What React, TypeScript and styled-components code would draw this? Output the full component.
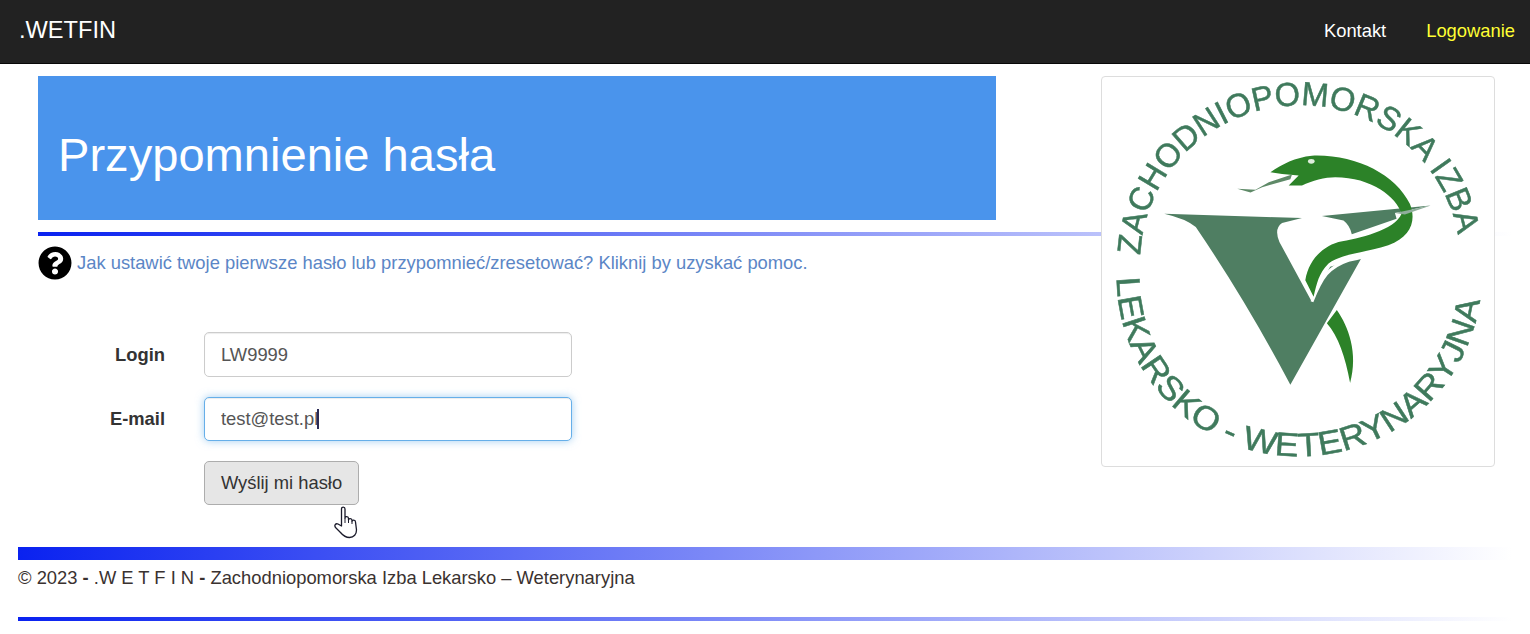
import styled, { createGlobalStyle } from "styled-components";
import { FaQuestionCircle } from "react-icons/fa";

const GlobalStyle = createGlobalStyle`
  html, body {
    margin: 0;
    padding: 0;
    height: 100%;
    overflow: hidden;
    background: #fff;
  }
  body {
    font-family: "Liberation Sans", Arial, sans-serif;
    font-size: 18.36px;
    color: #333;
  }
`;

const RULE_GRADIENT = "linear-gradient(to right, #0a22f0 0%, #ffffff 100%)";

const NavBar = styled.nav`
  height: 64px;
  box-sizing: border-box;
  background: #222;
  border-bottom: 1px solid #080808;
  display: flex;
  align-items: center;
  justify-content: space-between;
  padding: 0 15px 2px 19px;
`;

const Brand = styled.a`
  color: #fff;
  font-size: 23.6px;
`;

const NavLinks = styled.div`
  display: flex;
  gap: 40px;
`;

const NavLink = styled.a<{ active?: boolean }>`
  color: ${({ active }) => (active ? "#ffff33" : "#fff")};
`;

const Main = styled.main`
  position: relative;
  padding: 12px 18px 0 38px;
`;

const Banner = styled.header`
  width: 958px;
  height: 144px;
  box-sizing: border-box;
  background: #4a94ec;
  display: flex;
  align-items: center;
  padding: 12px 0 0 20px;
`;

const Title = styled.h1`
  margin: 0;
  color: #fff;
  font-size: 47.1px;
  font-weight: 400;
`;

const Rule = styled.div<{ thickness: number }>`
  height: ${({ thickness }) => thickness}px;
  background: ${RULE_GRADIENT};
`;

const BannerRule = styled(Rule)`
  margin-top: 12px;
`;

const HelpRow = styled.a`
  display: flex;
  align-items: center;
  gap: 5px;
  margin-top: 10px;
  height: 33px;
  color: #5b86c6;
  white-space: nowrap;
  line-height: 31px;
  svg {
    color: #000;
    width: 34px;
    height: 34px;
    flex: none;
  }
`;

const Form = styled.form`
  display: grid;
  grid-template-columns: 127px 368px;
  column-gap: 39px;
  row-gap: 20px;
  margin-top: 53px;
  align-items: center;
`;

const Label = styled.label`
  font-weight: 700;
  text-align: right;
`;

const InputWrap = styled.div`
  position: relative;
`;

const Input = styled.input<{ focused?: boolean; tall?: boolean }>`
  display: block;
  width: 100%;
  height: ${({ tall }) => (tall ? 45 : 44)}px;
  box-sizing: border-box;
  padding: 0 16px;
  border: 1px solid ${({ focused }) => (focused ? "#66afe9" : "#ccc")};
  border-radius: 5px;
  outline: none;
  color: #555;
  font: 18.36px "Liberation Sans", Arial, sans-serif;
  box-shadow: ${({ focused }) =>
    focused
      ? "inset 0 1px 1px rgba(0,0,0,.075), 0 0 8px rgba(102,175,233,.6)"
      : "inset 0 1px 1px rgba(0,0,0,.075)"};
`;

const Caret = styled.span`
  position: absolute;
  left: 113px;
  top: 12px;
  width: 2px;
  height: 20px;
  background: #2b2b55;
`;

const SubmitButton = styled.button`
  grid-column: 2;
  justify-self: start;
  width: 155px;
  height: 44px;
  box-sizing: border-box;
  border: 1px solid #adadad;
  border-radius: 5px;
  background: #e6e6e6;
  color: #333;
  font: 18.36px "Liberation Sans", Arial, sans-serif;
  padding: 0;
`;

const Pointer = styled.svg`
  position: absolute;
  left: 332px;
  top: 505px;
  width: 28px;
  height: 34px;
`;

const Thumbnail = styled.div`
  position: absolute;
  top: 12px;
  right: 35px;
  width: 394px;
  height: 391px;
  box-sizing: border-box;
  background: #fff;
  border: 1px solid #ddd;
  border-radius: 4px;
`;

const LogoSvg = styled.svg`
  display: block;
  width: 100%;
  height: 100%;
  overflow: visible;
  filter: blur(0.6px);
`;

const LogoText = styled.text`
  fill: #3f7a5c;
  stroke: #3f7a5c;
  stroke-width: 1.5px;
  font-family: "Liberation Sans", Arial, sans-serif;
  font-size: 100px;
`;

const Footer = styled.footer`
  padding: 0 18px;
  margin-top: 42px;
`;

const FooterText = styled.p`
  margin: 0;
  height: 57px;
  padding-top: 8px;
  box-sizing: border-box;
  line-height: 20px;
  color: #3a3230;
`;

function Logo() {
  return (
    <LogoSvg viewBox="18 18 1180 1172">
      <defs>
        <path id="arc-top" d="M 133 555 A 482 472 0 0 1 1090 498" />
        <path id="arc-bottom" d="M 62 622 A 545 535 0 0 0 1160 622" />
      </defs>
      <LogoText>
        <textPath href="#arc-top" textLength="1395" lengthAdjust="spacingAndGlyphs">
          ZACHODNIOPOMORSKA IZBA
        </textPath>
      </LogoText>
      <LogoText>
        <textPath href="#arc-bottom" textLength="1640" lengthAdjust="spacingAndGlyphs">
          LEKARSKO - WETERYNARYJNA
        </textPath>
      </LogoText>
      <path
        d="M205 430 L620 443 L560 458 Q535 475 552 515 L648 692 L705 590 L800 562 L585 945 Q450 690 300 470 Q270 445 205 430 Z"
        fill="#4f7e62"
      />
      <path
        d="M680 437 L1008 405 L900 428 L905 445 L770 492 Q765 465 745 450 Z"
        fill="#4f7e62"
      />
      <path
        d="M650 695 C680 620 700 590 760 570 C840 555 920 530 955 470"
        fill="none"
        stroke="#fff"
        strokeWidth="9"
      />
      <path
        d="M525 305 C560 280 600 260 650 255 C780 250 900 310 945 400 C965 450 950 500 880 525 C800 550 740 550 700 580 C670 610 665 640 655 680 L630 630 C640 570 680 530 730 515 C790 505 900 480 920 430 C905 380 830 320 720 320 C690 320 650 330 620 345 L580 345 L610 315 L560 310 Z"
        fill="#2c8228"
      />
      <path d="M900 428 L1008 405 L930 432 Z" fill="#8fae9b" />
      <ellipse cx="648" cy="272" rx="10" ry="7" fill="#dfeedd" />
      <path
        d="M590 312 L520 335 L480 358 L425 355 L465 366 L500 350 L585 326"
        fill="#5f8a68"
      />
      <path
        d="M725 720 C760 770 790 850 765 940 C750 860 730 800 695 760 Z"
        fill="#2c8228"
      />
    </LogoSvg>
  );
}

export default function App() {
  return (
    <>
      <GlobalStyle />
      <NavBar>
        <Brand>.WETFIN</Brand>
        <NavLinks>
          <NavLink>Kontakt</NavLink>
          <NavLink active>Logowanie</NavLink>
        </NavLinks>
      </NavBar>
      <Main>
        <Banner>
          <Title>Przypomnienie hasła</Title>
        </Banner>
        <BannerRule thickness={4} />
        <HelpRow>
          <FaQuestionCircle />
          <span>Jak ustawić twoje pierwsze hasło lub przypomnieć/zresetować? Kliknij by uzyskać pomoc.</span>
        </HelpRow>
        <Form>
          <Label>Login</Label>
          <InputWrap>
            <Input tall readOnly value="LW9999" />
          </InputWrap>
          <Label>E-mail</Label>
          <InputWrap>
            <Input focused readOnly value="test@test.pl" />
            <Caret />
          </InputWrap>
          <SubmitButton type="button">Wyślij mi hasło</SubmitButton>
        </Form>
        <Thumbnail>
          <Logo />
        </Thumbnail>
      </Main>
      <Footer>
        <Rule thickness={13} />
        <FooterText>
          © 2023 <b>-</b> .W E T F I N <b>-</b> Zachodniopomorska Izba Lekarsko – Weterynaryjna
        </FooterText>
        <Rule thickness={4} />
      </Footer>
      <Pointer viewBox="0 0 28 34">
        <path
          d="M9.5 21 L9.5 4 C9.5 1.5 13 1.5 13 4 L13 13 C13 11 16.5 11 16.5 13.5 L16.5 15 C16.5 13 20 13 20 15.5 L20 16.5 C20 14.5 23.5 14.5 23.5 17 L24.5 25 C24.5 29 22 32.5 17.5 32.5 C13.5 32.5 11 30.5 8.5 27.5 L3.5 22.5 C2 20.5 3.5 18 6 19 Z"
          fill="#fff"
          stroke="#1a1a2a"
          strokeWidth="1.3"
          strokeLinejoin="round"
        />
        <path d="M13 13 L13 18 M16.5 15 L16.5 18 M20 16.5 L20 19" stroke="#1a1a2a" strokeWidth="1" fill="none" />
      </Pointer>
    </>
  );
}
